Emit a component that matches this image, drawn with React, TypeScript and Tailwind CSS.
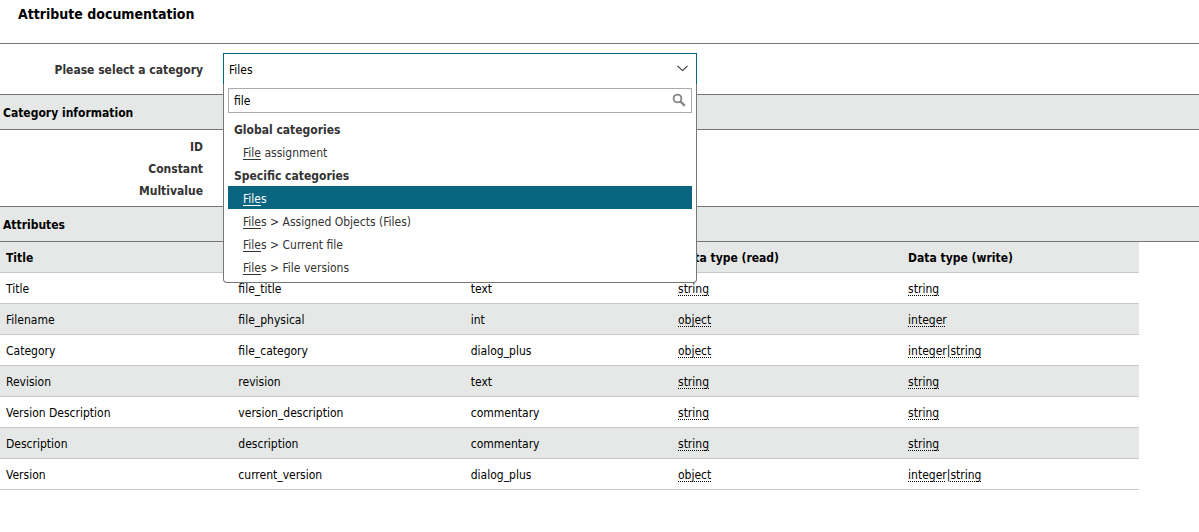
import React, { useState } from "react";

type Group = { title: string; items: string[] };
type Attribute = {
  title: string;
  name: string;
  type: string;
  read: string[];
  write: string[];
};

const groups: Group[] = [
  { title: "Global categories", items: ["File assignment"] },
  {
    title: "Specific categories",
    items: [
      "Files",
      "Files > Assigned Objects (Files)",
      "Files > Current file",
      "Files > File versions",
    ],
  },
];

const attributes: Attribute[] = [
  { title: "Title", name: "file_title", type: "text", read: ["string"], write: ["string"] },
  { title: "Filename", name: "file_physical", type: "int", read: ["object"], write: ["integer"] },
  { title: "Category", name: "file_category", type: "dialog_plus", read: ["object"], write: ["integer", "string"] },
  { title: "Revision", name: "revision", type: "text", read: ["string"], write: ["string"] },
  { title: "Version Description", name: "version_description", type: "commentary", read: ["string"], write: ["string"] },
  { title: "Description", name: "description", type: "commentary", read: ["string"], write: ["string"] },
  { title: "Version", name: "current_version", type: "dialog_plus", read: ["object"], write: ["integer", "string"] },
];

const Highlight = ({ text, search }: { text: string; search: string }) => {
  const start = text.toLowerCase().indexOf(search.toLowerCase());
  if (!search || start < 0) return <>{text}</>;
  return (
    <>
      {text.slice(0, start)}
      <span className="underline underline-offset-2">
        {text.slice(start, start + search.length)}
      </span>
      {text.slice(start + search.length)}
    </>
  );
};

const CategorySelect = () => {
  const [open, setOpen] = useState(true);
  const [selected, setSelected] = useState("Files");
  const [search, setSearch] = useState("file");

  const handleSelect = (item: string) => {
    setSelected(item);
    setOpen(false);
  };

  return (
    <div className="relative w-[474px] text-black">
      <button
        id="category"
        type="button"
        aria-haspopup="listbox"
        aria-expanded={open}
        className="flex h-[31px] w-full items-center justify-between border border-b-0 border-[#0a6580] bg-white pr-2 pl-[5px]"
        onClick={() => setOpen((prev) => !prev)}>
        <span className="pt-0.5">{selected}</span>
        <svg className="mb-0.5" width="11" height="7" viewBox="0 0 11 7" fill="none" stroke="#333" strokeWidth="1.1">
          <path d="M0.5 0.8 5.5 5.6 10.5 0.8" />
        </svg>
      </button>
      {open && (
        <div className="absolute top-full left-0 z-10 w-full rounded-b border border-t-0 border-[#767676] bg-white px-1 pt-1 pb-1">
          <div className="flex h-[25px] items-center border border-[#aaa] pr-[5px]">
            <input
              type="text"
              aria-label="Search category"
              className="h-full min-w-0 flex-1 pl-[5px] outline-none"
              value={search}
              onChange={(e) => setSearch(e.target.value)}
            />
            <svg className="mb-0.5" width="14" height="14" viewBox="0 0 14 14" fill="none" stroke="#888">
              <circle cx="5.5" cy="5.5" r="3.9" strokeWidth="1.9" />
              <path d="M8.4 8.4 12.8 12.8" strokeWidth="2.4" />
            </svg>
          </div>
          <div role="listbox" aria-labelledby="category-label" className="mt-1 leading-[19px] text-[#333]">
            {groups.map((group) => (
              <div key={group.title} role="group" aria-label={group.title}>
                <div className="pt-1 pl-1.5 font-bold">{group.title}</div>
                {group.items
                  .filter((item) => item.toLowerCase().includes(search.toLowerCase()))
                  .map((item) => (
                    <div
                      key={item}
                      role="option"
                      aria-selected={item === selected}
                      className="cursor-pointer pt-1 pl-[15px] aria-selected:bg-[#0a6580] aria-selected:text-white"
                      onClick={() => handleSelect(item)}>
                      <Highlight text={item} search={search} />
                    </div>
                  ))}
              </div>
            ))}
          </div>
        </div>
      )}
    </div>
  );
};

const SectionTitle = ({ children }: { children: React.ReactNode }) => (
  <h2 className="border-y border-[#767676] bg-[#e5e8e7] pt-0.5 pl-[3px] font-bold leading-8">
    {children}
  </h2>
);

const Types = ({ types }: { types: string[] }) => (
  <>
    {types.map((type, index) => (
      <React.Fragment key={type}>
        {index > 0 && "|"}
        <abbr className="underline decoration-dotted decoration-1 underline-offset-2 [text-decoration-skip-ink:none]">
          {type}
        </abbr>
      </React.Fragment>
    ))}
  </>
);

const App = () => {
  return (
    <main className="bg-white font-['DejaVu_Sans_Condensed','DejaVu_Sans',sans-serif] text-[12px] text-black">
      <h1 className="h-11 border-b border-[#767676] pl-[18px] text-[14px] font-bold leading-7">
        Attribute documentation
      </h1>

      {/* Category picker */}
      <div className="flex items-start gap-5 pt-[9px] pb-[10px]">
        <label
          id="category-label"
          htmlFor="category"
          className="w-[203px] pt-1 text-right font-bold leading-[27px] text-[#333]">
          Please select a category
        </label>
        <CategorySelect />
      </div>

      <SectionTitle>Category information</SectionTitle>
      <dl className="w-[203px] pt-1.5 pb-1 text-right font-bold leading-[22px] text-[#333]">
        <dt>ID</dt>
        <dt>Constant</dt>
        <dt>Multivalue</dt>
      </dl>

      <SectionTitle>Attributes</SectionTitle>
      <table className="w-[95%] table-fixed border-collapse text-left leading-7">
        <colgroup>
          <col className="w-[20.4%]" />
          <col className="w-[20.4%]" />
          <col className="w-[18.2%]" />
          <col className="w-[20.2%]" />
          <col />
        </colgroup>
        <thead>
          <tr className="border-b border-[#c8c8c8] bg-[#e5e8e7]">
            <th className="px-1.5 pt-0.5">Title</th>
            <th className="px-1.5 pt-0.5"></th>
            <th className="px-1.5 pt-0.5"></th>
            <th className="px-1.5 pt-0.5">Data type (read)</th>
            <th className="px-1.5 pt-0.5">Data type (write)</th>
          </tr>
        </thead>
        <tbody>
          {attributes.map((attribute) => (
            <tr key={attribute.name} className="border-b border-[#c8c8c8] even:bg-[#e5e8e7]">
              <td className="px-1.5 pt-0.5">{attribute.title}</td>
              <td className="px-1.5 pt-0.5">{attribute.name}</td>
              <td className="px-1.5 pt-0.5">{attribute.type}</td>
              <td className="px-1.5 pt-0.5"><Types types={attribute.read} /></td>
              <td className="px-1.5 pt-0.5"><Types types={attribute.write} /></td>
            </tr>
          ))}
        </tbody>
      </table>
    </main>
  );
};

export default App;
